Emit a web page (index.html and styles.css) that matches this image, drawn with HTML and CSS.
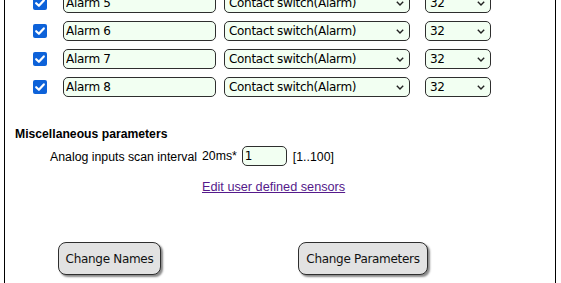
FILE: index.html
```html
<!DOCTYPE html>
<html>
<head>
<meta charset="utf-8">
<link rel="stylesheet" href="styles.css">
</head>
<body>
<div class="panel">
  <div class="rows">
    <div class="row">
      <span class="check"><svg viewBox="0 0 14 14" width="14" height="14"><polyline points="3.2,7.2 5.9,9.8 10.8,4.4" fill="none" stroke="#fff" stroke-width="2.2" stroke-linecap="round" stroke-linejoin="round"/></svg></span>
      <input class="name" type="text" value="Alarm 5">
      <span class="sel type"><select><option>Contact switch(Alarm)</option></select><svg class="chev" viewBox="0 0 8 5" width="8" height="5"><polyline points="0.8,0.8 4,4 7.2,0.8" fill="none" stroke="#222" stroke-width="1.4"/></svg></span>
      <span class="sel num"><select><option>32</option></select><svg class="chev" viewBox="0 0 8 5" width="8" height="5"><polyline points="0.8,0.8 4,4 7.2,0.8" fill="none" stroke="#222" stroke-width="1.4"/></svg></span>
    </div>
    <div class="row">
      <span class="check"><svg viewBox="0 0 14 14" width="14" height="14"><polyline points="3.2,7.2 5.9,9.8 10.8,4.4" fill="none" stroke="#fff" stroke-width="2.2" stroke-linecap="round" stroke-linejoin="round"/></svg></span>
      <input class="name" type="text" value="Alarm 6">
      <span class="sel type"><select><option>Contact switch(Alarm)</option></select><svg class="chev" viewBox="0 0 8 5" width="8" height="5"><polyline points="0.8,0.8 4,4 7.2,0.8" fill="none" stroke="#222" stroke-width="1.4"/></svg></span>
      <span class="sel num"><select><option>32</option></select><svg class="chev" viewBox="0 0 8 5" width="8" height="5"><polyline points="0.8,0.8 4,4 7.2,0.8" fill="none" stroke="#222" stroke-width="1.4"/></svg></span>
    </div>
    <div class="row">
      <span class="check"><svg viewBox="0 0 14 14" width="14" height="14"><polyline points="3.2,7.2 5.9,9.8 10.8,4.4" fill="none" stroke="#fff" stroke-width="2.2" stroke-linecap="round" stroke-linejoin="round"/></svg></span>
      <input class="name" type="text" value="Alarm 7">
      <span class="sel type"><select><option>Contact switch(Alarm)</option></select><svg class="chev" viewBox="0 0 8 5" width="8" height="5"><polyline points="0.8,0.8 4,4 7.2,0.8" fill="none" stroke="#222" stroke-width="1.4"/></svg></span>
      <span class="sel num"><select><option>32</option></select><svg class="chev" viewBox="0 0 8 5" width="8" height="5"><polyline points="0.8,0.8 4,4 7.2,0.8" fill="none" stroke="#222" stroke-width="1.4"/></svg></span>
    </div>
    <div class="row">
      <span class="check"><svg viewBox="0 0 14 14" width="14" height="14"><polyline points="3.2,7.2 5.9,9.8 10.8,4.4" fill="none" stroke="#fff" stroke-width="2.2" stroke-linecap="round" stroke-linejoin="round"/></svg></span>
      <input class="name" type="text" value="Alarm 8">
      <span class="sel type"><select><option>Contact switch(Alarm)</option></select><svg class="chev" viewBox="0 0 8 5" width="8" height="5"><polyline points="0.8,0.8 4,4 7.2,0.8" fill="none" stroke="#222" stroke-width="1.4"/></svg></span>
      <span class="sel num"><select><option>32</option></select><svg class="chev" viewBox="0 0 8 5" width="8" height="5"><polyline points="0.8,0.8 4,4 7.2,0.8" fill="none" stroke="#222" stroke-width="1.4"/></svg></span>
    </div>
  </div>

  <div class="misc-title">Miscellaneous parameters</div>
  <div class="misc">
    <div class="label">Analog inputs scan interval</div>
    <div class="value"><span>20ms*</span><input class="small" type="text" value="1"><span class="range">[1..100]</span></div>
    <div></div>
    <div class="value"><a class="link" href="#">Edit user defined sensors</a></div>
  </div>

  <div class="buttons">
    <button class="btn btn-names">Change Names</button>
    <button class="btn btn-params">Change Parameters</button>
  </div>
</div>
</body>
</html>
```

FILE: styles.css
```css
html, body {
  margin: 0;
  padding: 0;
  background: #fff;
  overflow: hidden;
}

.panel {
  margin: -12px 0 0 4px;
  width: 552px;
  height: 330px;
  box-sizing: border-box;
  border: 1px solid #000;
  font-family: "Liberation Sans", Arial, sans-serif;
  font-size: 12px;
  color: #000;
}

.rows {
  display: flex;
  flex-direction: column;
}

.row {
  display: flex;
  align-items: center;
  height: 28px;
}

.check {
  display: block;
  width: 14px;
  height: 14px;
  margin-left: 28px;
  border-radius: 2px;
  background: #0d62d9;
}

.check svg {
  display: block;
}

.name,
.sel select,
.small {
  box-sizing: border-box;
  height: 20px;
  border: 1px solid #2e2e2e;
  border-radius: 5px;
  background: #f2fff2;
  font-family: "DejaVu Sans", Tahoma, sans-serif;
  font-size: 12px;
  letter-spacing: -0.3px;
  color: #000;
  margin: 0;
  outline: none;
}

.name {
  width: 153px;
  margin-left: 16px;
  padding: 0 2px;
}

.sel {
  position: relative;
  display: block;
}

.sel select {
  appearance: none;
  -webkit-appearance: none;
  width: 100%;
  padding: 0 0 0 4px;
  display: block;
}

.type {
  width: 186px;
  margin-left: 8px;
}

.num {
  width: 66px;
  margin-left: 15px;
}

.chev {
  position: absolute;
  right: 6px;
  top: 8px;
  pointer-events: none;
}

.misc-title {
  font-weight: bold;
  font-size: 12.2px;
  line-height: 14px;
  margin: 26px 0 0 10px;
}

.misc {
  display: grid;
  grid-template-columns: 147px auto;
  column-gap: 5px;
  row-gap: 14px;
  margin: 5px 0 0 45px;
  line-height: 14px;
  font-size: 12.3px;
}

.label {
  text-align: right;
  align-self: center;
  padding-top: 2px;
}

.value {
  display: flex;
  align-items: center;
}

.small {
  width: 45px;
  margin-left: 5px;
  padding: 0 2px;
  font-size: 12px;
}

.range {
  margin-left: 6px;
  padding-top: 2px;
}

.link {
  color: #551a8b;
  text-decoration: underline;
  font-size: 12.7px;
}

.buttons {
  display: flex;
  gap: 137px;
  margin: 48px 0 0 53px;
}

.btn {
  box-sizing: border-box;
  height: 33px;
  padding: 0;
  border: 1px solid #2e2e2e;
  border-radius: 8px;
  background: #e2e2e2;
  box-shadow: 2px 2px 2px #8a8a8a;
  font-family: "DejaVu Sans", Tahoma, sans-serif;
  font-size: 12px;
  letter-spacing: -0.3px;
  color: #111;
}

.btn-names {
  width: 103px;
}

.btn-params {
  width: 130px;
}
```
